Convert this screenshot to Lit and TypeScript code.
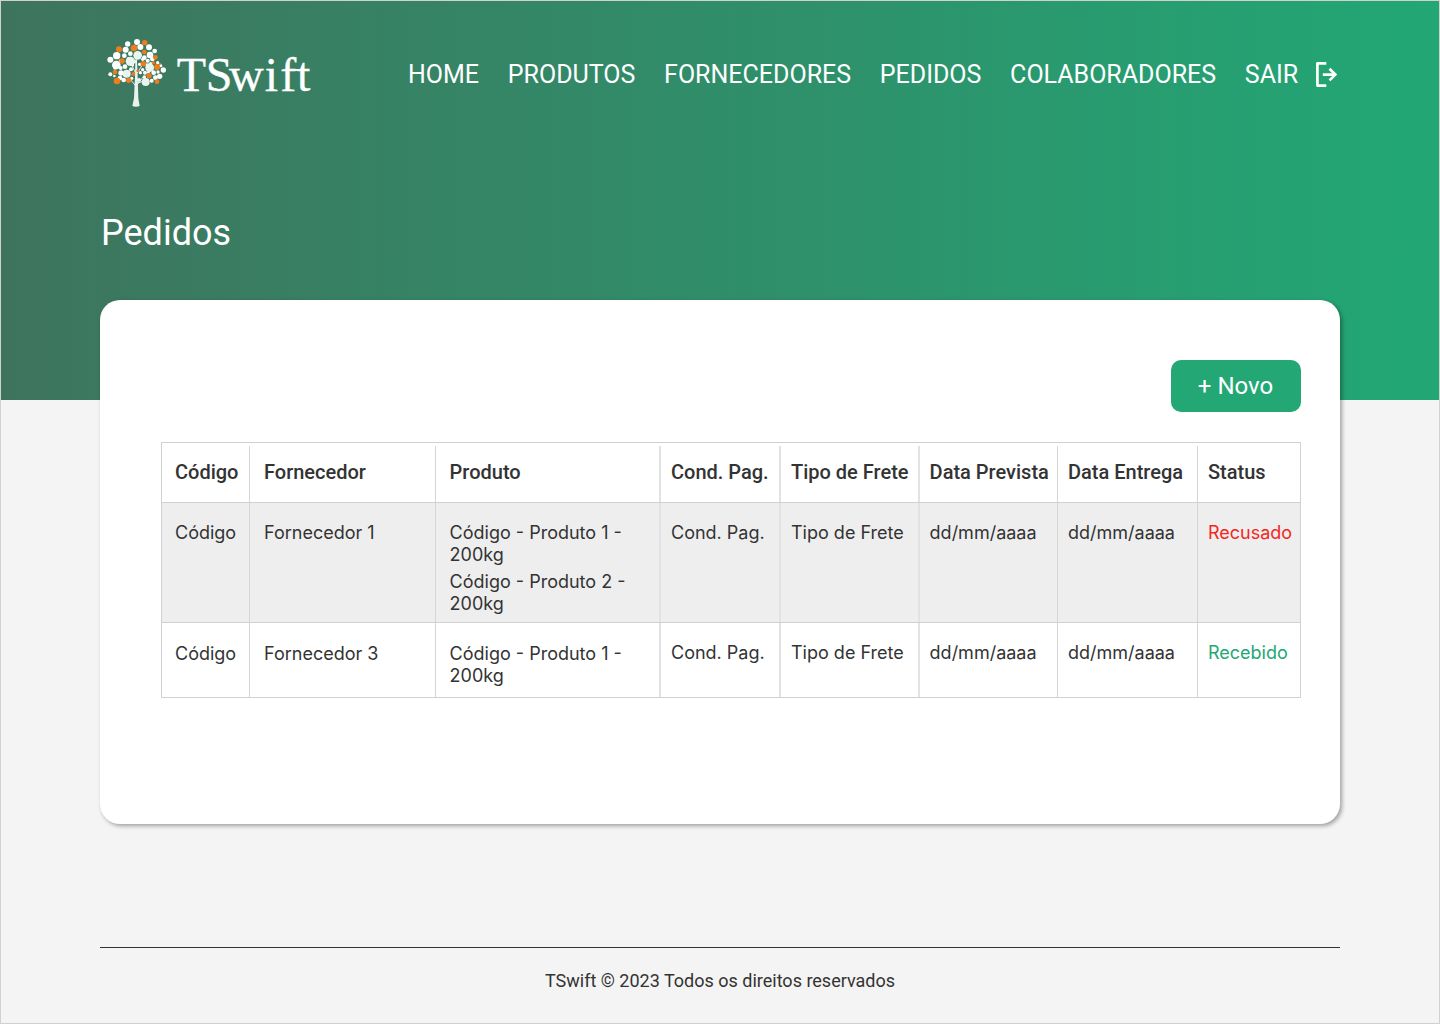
import { LitElement, html, css, svg } from "lit";
import { customElement } from "lit/decorators.js";

type Dot = [number, number, number];

const whiteDots: Dot[] = [
  [98, 42, 8], [126, 36, 9], [92, 59, 9], [136, 51, 9], [162, 52, 9], [65, 77, 11], [46, 89, 9],
  [64, 105, 13], [88, 77, 7], [106, 71, 7], [179, 63, 7], [165, 75, 10], [148, 83, 7], [76, 93, 5],
  [172, 87, 7], [158, 92, 6], [90, 110, 7], [77, 114, 6], [143, 88, 5], [188, 98, 5], [197, 107, 5],
  [205, 120, 8], [60, 114, 5], [78, 129, 8], [46, 133, 6], [58, 138, 4], [75, 144, 7], [108, 118, 6],
  [86, 150, 7], [194, 139, 8], [181, 143, 7], [176, 128, 7], [189, 126, 5], [170, 152, 6], [150, 128, 6],
  [143, 119, 5], [110, 145, 5], [148, 141, 5], [118, 95, 5], [134, 103, 5], [156, 105, 5], [113, 106, 4],
  [99, 86, 4], [167, 100, 4], [136, 128, 5], [160, 127, 4],
];
const paleDots: Dot[] = [[128, 76, 13], [106, 94, 14], [164, 113, 13], [95, 131, 12], [152, 156, 12], [132, 150, 6]];
const orangeDots: Dot[] = [
  [72, 58, 9], [117, 54, 10], [149, 38, 8], [148, 66, 7], [81, 93, 8], [181, 82, 7], [145, 101, 8],
  [175, 98, 5], [186, 111, 9], [60, 126, 7], [66, 153, 10], [101, 151, 8], [115, 132, 6], [162, 137, 8],
  [186, 155, 7], [128, 123, 4], [195, 102, 3],
];

const dots = (list: Dot[], cls: string) =>
  list.map(([x, y, r]) => svg`<circle class=${cls} cx=${x} cy=${y} r=${r}></circle>`);

interface Order {
  code: string;
  supplier: string;
  products: string[];
  status: string;
  kind: string;
}

const orders: Order[] = [
  { code: "Código", supplier: "Fornecedor 1", products: ["Código - Produto 1 - 200kg", "Código - Produto 2 - 200kg"], status: "Recusado", kind: "refused" },
  { code: "Código", supplier: "Fornecedor 3", products: ["Código - Produto 1 - 200kg"], status: "Recebido", kind: "received" },
];

@customElement("app-root")
export class AppRoot extends LitElement {
  static styles = css`
    :host { display: block; }
    * { box-sizing: border-box; }
    .page {
      width: 1440px; height: 1024px; overflow: hidden;
      background: #f4f4f4; border: 1px solid #d1d1d1;
      font-family: Roboto, sans-serif; color: #333;
      display: flex; flex-direction: column;
    }
    .hero {
      flex: none; height: 399px; padding: 29px 99px 0 94px; color: #fff;
      background: linear-gradient(90deg, #3e745e 0%, #22a775 100%);
    }
    .bar { display: flex; align-items: flex-start; height: 85px; }
    .logo { flex: none; width: 230px; height: 85px; display: block; }
    .white { fill: #fff; }
    .pale { fill: #eaf5ef; }
    .orange { fill: #f07d1a; }
    .trunk { fill: #e9f2ec; }
    .twig { fill: none; stroke: #e9f2ec; stroke-width: 3; }
    .word { fill: #fff; stroke: #fff; stroke-width: 1; font-family: "Liberation Serif", serif; font-size: 144px; }
    nav { display: flex; gap: 28.7px; margin-left: 83px; padding-top: 30px; }
    nav a { font-size: 25px; line-height: 30px; white-space: nowrap; }
    .exit { flex: none; width: 24px; height: 28px; margin: 30px 0 0 15.5px; fill: none; stroke: #fff; stroke-width: 2.7; }
    .exit .frame { stroke-linejoin: round; }
    h1 { margin: 97px 0 0 6px; font-size: 36px; line-height: 42px; font-weight: 400; }
    .card {
      flex: none; width: 1240px; height: 524px; margin: -100px 0 0 99px; padding: 60px 39px 0 61px;
      background: #fff; border-radius: 20px; box-shadow: 2px 2px 4px rgba(0, 0, 0, .35);
      display: flex; flex-direction: column;
    }
    .new {
      align-self: flex-end; width: 130px; height: 52.4px; border: 0; border-radius: 10px; padding: 0 1px 0 0;
      background: #22a775; color: #fff; font: 400 24px/52px Roboto, sans-serif; text-align: center;
    }
    .table { margin-top: 29.6px; width: 1140px; border: 1px solid #d1d1d1; }
    .row { display: grid; grid-template-columns: 88px 186px 225px 120px 139px 138px 140px 1fr; }
    .row + .row { border-top: 1px solid #d1d1d1; }
    .head { height: 59px; padding-top: 3px; font-size: 20px; line-height: 24px; font-weight: 500; }
    .body { font-size: 18px; line-height: 22px; font-family: Inter, sans-serif; font-weight: 400; }
    .tall { height: 120px; background: #eee; }
    .short { height: 75px; }
    .cell { border-right: 1px solid #d5d5d5; padding: 19px 0 0 10px; white-space: nowrap; }
    .cell:nth-child(3), .cell:nth-child(4), .cell:nth-child(5) { border-right: 2px solid #e2e2e2; }
    .head .cell { padding-top: 14px; }
    .cell:nth-child(1) { padding-left: 13px; }
    .cell:nth-child(2) { padding-left: 14px; }
    .cell:nth-child(3) { padding-left: 13.6px; white-space: normal; }
    .cell:nth-child(6) { padding-left: 9.6px; }
    .cell:last-child { border-right: 0; }
    .short .cell:nth-child(-n + 3) { padding-top: 20px; }
    .item { width: 190px; }
    .item + .item { margin-top: 5px; }
    .refused { color: #f3271d; }
    .received { color: #22a775; }
    footer { margin: 123px 99px 0; border-top: 1px solid #333; padding-top: 22px; text-align: center; font-size: 18px; line-height: 21px; }
  `;

  render() {
    return html`
      <div class="page">
        <header class="hero">
          <div class="bar">
            <svg class="logo" viewBox="0 0 690 255">
              <path class="trunk" d="M121 88 L126 88 L128 140 L130 205 L134 228 Q123 233 112 228 L117 205 L120 140 Z"></path>
              <path class="twig" d="M122 168 L104 145 M126 165 L145 140 M122 130 L108 100 M126 130 L140 108 M124 160 L158 150"></path>
              ${dots(whiteDots, "white")}${dots(paleDots, "pale")}${dots(orangeDots, "orange")}
              <text class="word" y="183" x="245 332 402 509 556 606">TSwift</text>
              <path class="white" d="M594 117H614V123H594Z"></path>
            </svg>
            <nav>
              <a>HOME</a><a>PRODUTOS</a><a>FORNECEDORES</a><a>PEDIDOS</a><a>COLABORADORES</a><a>SAIR</a>
            </nav>
            <svg class="exit" viewBox="0 0 24 28">
              <path class="frame" d="M12.3 3.4H3.4V25.6H12.3"></path>
              <path d="M8.8 14.6H21M15.5 8.8L21.3 14.6L15.5 20.4"></path>
            </svg>
          </div>
          <h1>Pedidos</h1>
        </header>
        <main class="card">
          <button class="new">+ Novo</button>
          <div class="table">
            <div class="row head">
              ${["Código", "Fornecedor", "Produto", "Cond. Pag.", "Tipo de Frete", "Data Prevista", "Data Entrega", "Status"].map(
                (t) => html`<div class="cell">${t}</div>`
              )}
            </div>
            ${orders.map(
              (o) => html`<div class="row body ${o.products.length > 1 ? "tall" : "short"}">
                <div class="cell">${o.code}</div>
                <div class="cell">${o.supplier}</div>
                <div class="cell">${o.products.map((p) => html`<div class="item">${p}</div>`)}</div>
                <div class="cell">Cond. Pag.</div>
                <div class="cell">Tipo de Frete</div>
                <div class="cell">dd/mm/aaaa</div>
                <div class="cell">dd/mm/aaaa</div>
                <div class="cell ${o.kind}">${o.status}</div>
              </div>`
            )}
          </div>
        </main>
        <footer>TSwift © 2023 Todos os direitos reservados</footer>
      </div>
    `;
  }
}
